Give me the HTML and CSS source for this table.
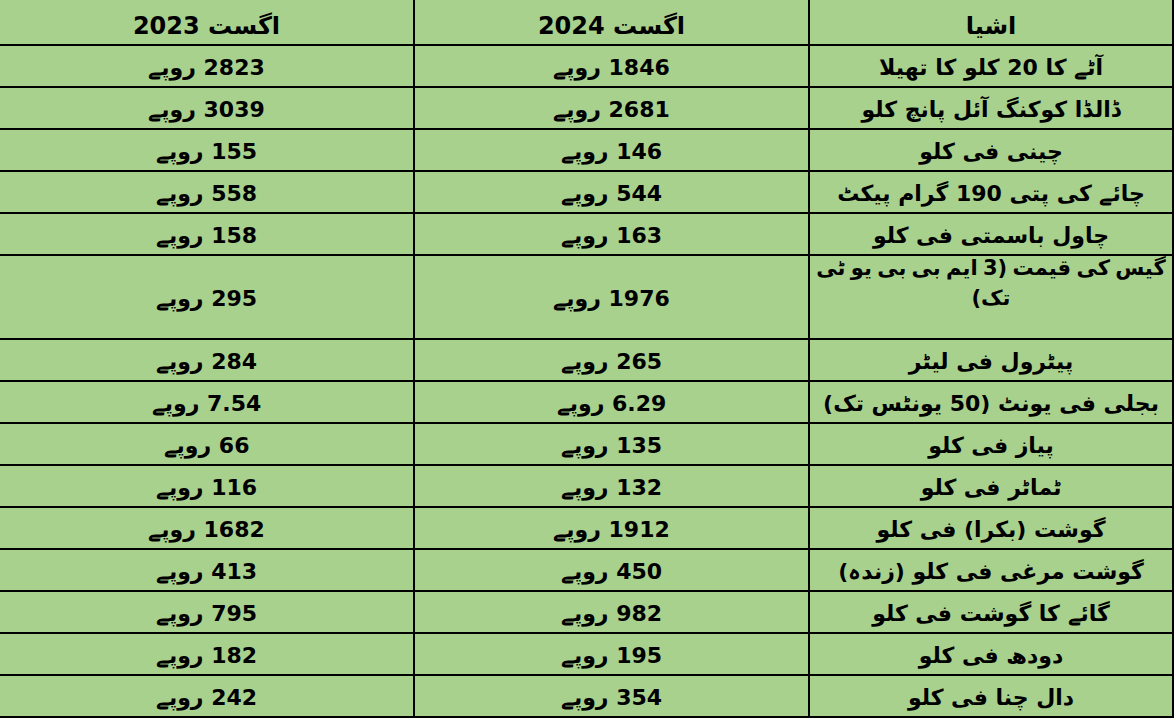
FILE: index.html
```html
<!DOCTYPE html>
<html lang="ur" dir="rtl">
<head>
<meta charset="utf-8">
<title>اشیا کی قیمتیں</title>
<link rel="stylesheet" href="styles.css">
</head>
<body>
<div class="sheet">
  <div class="cell item head"><span>اشیا</span></div>
  <div class="cell mid head"><span>اگست <span class="n">2024</span></span></div>
  <div class="cell old head"><span>اگست <span class="n">2023</span></span></div>

  <div class="cell item"><span>آٹے کا <span class="n">20</span> کلو کا تھیلا</span></div>
  <div class="cell mid"><span><span class="n">1846</span> روپے</span></div>
  <div class="cell old"><span><span class="n">2823</span> روپے</span></div>

  <div class="cell item"><span>ڈالڈا کوکنگ آئل پانچ کلو</span></div>
  <div class="cell mid"><span><span class="n">2681</span> روپے</span></div>
  <div class="cell old"><span><span class="n">3039</span> روپے</span></div>

  <div class="cell item"><span>چینی فی کلو</span></div>
  <div class="cell mid"><span><span class="n">146</span> روپے</span></div>
  <div class="cell old"><span><span class="n">155</span> روپے</span></div>

  <div class="cell item"><span>چائے کی پتی <span class="n">190</span> گرام پیکٹ</span></div>
  <div class="cell mid"><span><span class="n">544</span> روپے</span></div>
  <div class="cell old"><span><span class="n">558</span> روپے</span></div>

  <div class="cell item"><span>چاول باسمتی فی کلو</span></div>
  <div class="cell mid"><span><span class="n">163</span> روپے</span></div>
  <div class="cell old"><span><span class="n">158</span> روپے</span></div>

  <div class="cell item tall two"><span class="wrap">گیس کی قیمت (<span class="n">3</span> ایم بی بی یو ٹی<br>تک)</span></div>
  <div class="cell mid tall"><span><span class="n">1976</span> روپے</span></div>
  <div class="cell old tall"><span><span class="n">295</span> روپے</span></div>

  <div class="cell item"><span>پیٹرول فی لیٹر</span></div>
  <div class="cell mid"><span><span class="n">265</span> روپے</span></div>
  <div class="cell old"><span><span class="n">284</span> روپے</span></div>

  <div class="cell item"><span>بجلی فی یونٹ (<span class="n">50</span> یونٹس تک)</span></div>
  <div class="cell mid"><span><span class="n">6.29</span> روپے</span></div>
  <div class="cell old"><span><span class="n">7.54</span> روپے</span></div>

  <div class="cell item"><span>پیاز فی کلو</span></div>
  <div class="cell mid"><span><span class="n">135</span> روپے</span></div>
  <div class="cell old"><span><span class="n">66</span> روپے</span></div>

  <div class="cell item"><span>ٹماٹر فی کلو</span></div>
  <div class="cell mid"><span><span class="n">132</span> روپے</span></div>
  <div class="cell old"><span><span class="n">116</span> روپے</span></div>

  <div class="cell item"><span>گوشت (بکرا) فی کلو</span></div>
  <div class="cell mid"><span><span class="n">1912</span> روپے</span></div>
  <div class="cell old"><span><span class="n">1682</span> روپے</span></div>

  <div class="cell item"><span>گوشت مرغی فی کلو (زندہ)</span></div>
  <div class="cell mid"><span><span class="n">450</span> روپے</span></div>
  <div class="cell old"><span><span class="n">413</span> روپے</span></div>

  <div class="cell item"><span>گائے کا گوشت فی کلو</span></div>
  <div class="cell mid"><span><span class="n">982</span> روپے</span></div>
  <div class="cell old"><span><span class="n">795</span> روپے</span></div>

  <div class="cell item"><span>دودھ فی کلو</span></div>
  <div class="cell mid"><span><span class="n">195</span> روپے</span></div>
  <div class="cell old"><span><span class="n">182</span> روپے</span></div>

  <div class="cell item"><span>دال چنا فی کلو</span></div>
  <div class="cell mid"><span><span class="n">354</span> روپے</span></div>
  <div class="cell old"><span><span class="n">242</span> روپے</span></div>
</div>
</body>
</html>
```

FILE: styles.css
```css
* { box-sizing: border-box; }
html, body {
  margin: 0;
  padding: 0;
  background: #a9d18e;
}
body {
  width: 1174px;
  height: 718px;
  overflow: hidden;
}
.sheet {
  direction: rtl;
  display: grid;
  grid-template-columns: 364px 397px 413px;
  width: 1174px;
  font-family: "DejaVu Sans", sans-serif;
  font-weight: bold;
  font-size: 22px;
  color: #000;
}
.cell {
  display: flex;
  align-items: center;
  justify-content: center;
  text-align: center;
  height: 42px;
  padding-top: 4px;
  border-bottom: 2px solid #000;
  white-space: nowrap;
  line-height: 1.2;
}
.cell.head {
  height: 46px;
  padding-top: 8px;
  font-size: 24px;
}
.cell.tall {
  height: 84px;
}
.cell.two {
  padding-top: 0;
  padding-bottom: 28px;
}
.wrap {
  font-size: 21px;
  line-height: 30px;
  word-spacing: -2px;
}
.item {
  border-right: 2px solid #000;
}
.mid {
  border-right: 2px solid #000;
  border-left: 2px solid #000;
}
```
